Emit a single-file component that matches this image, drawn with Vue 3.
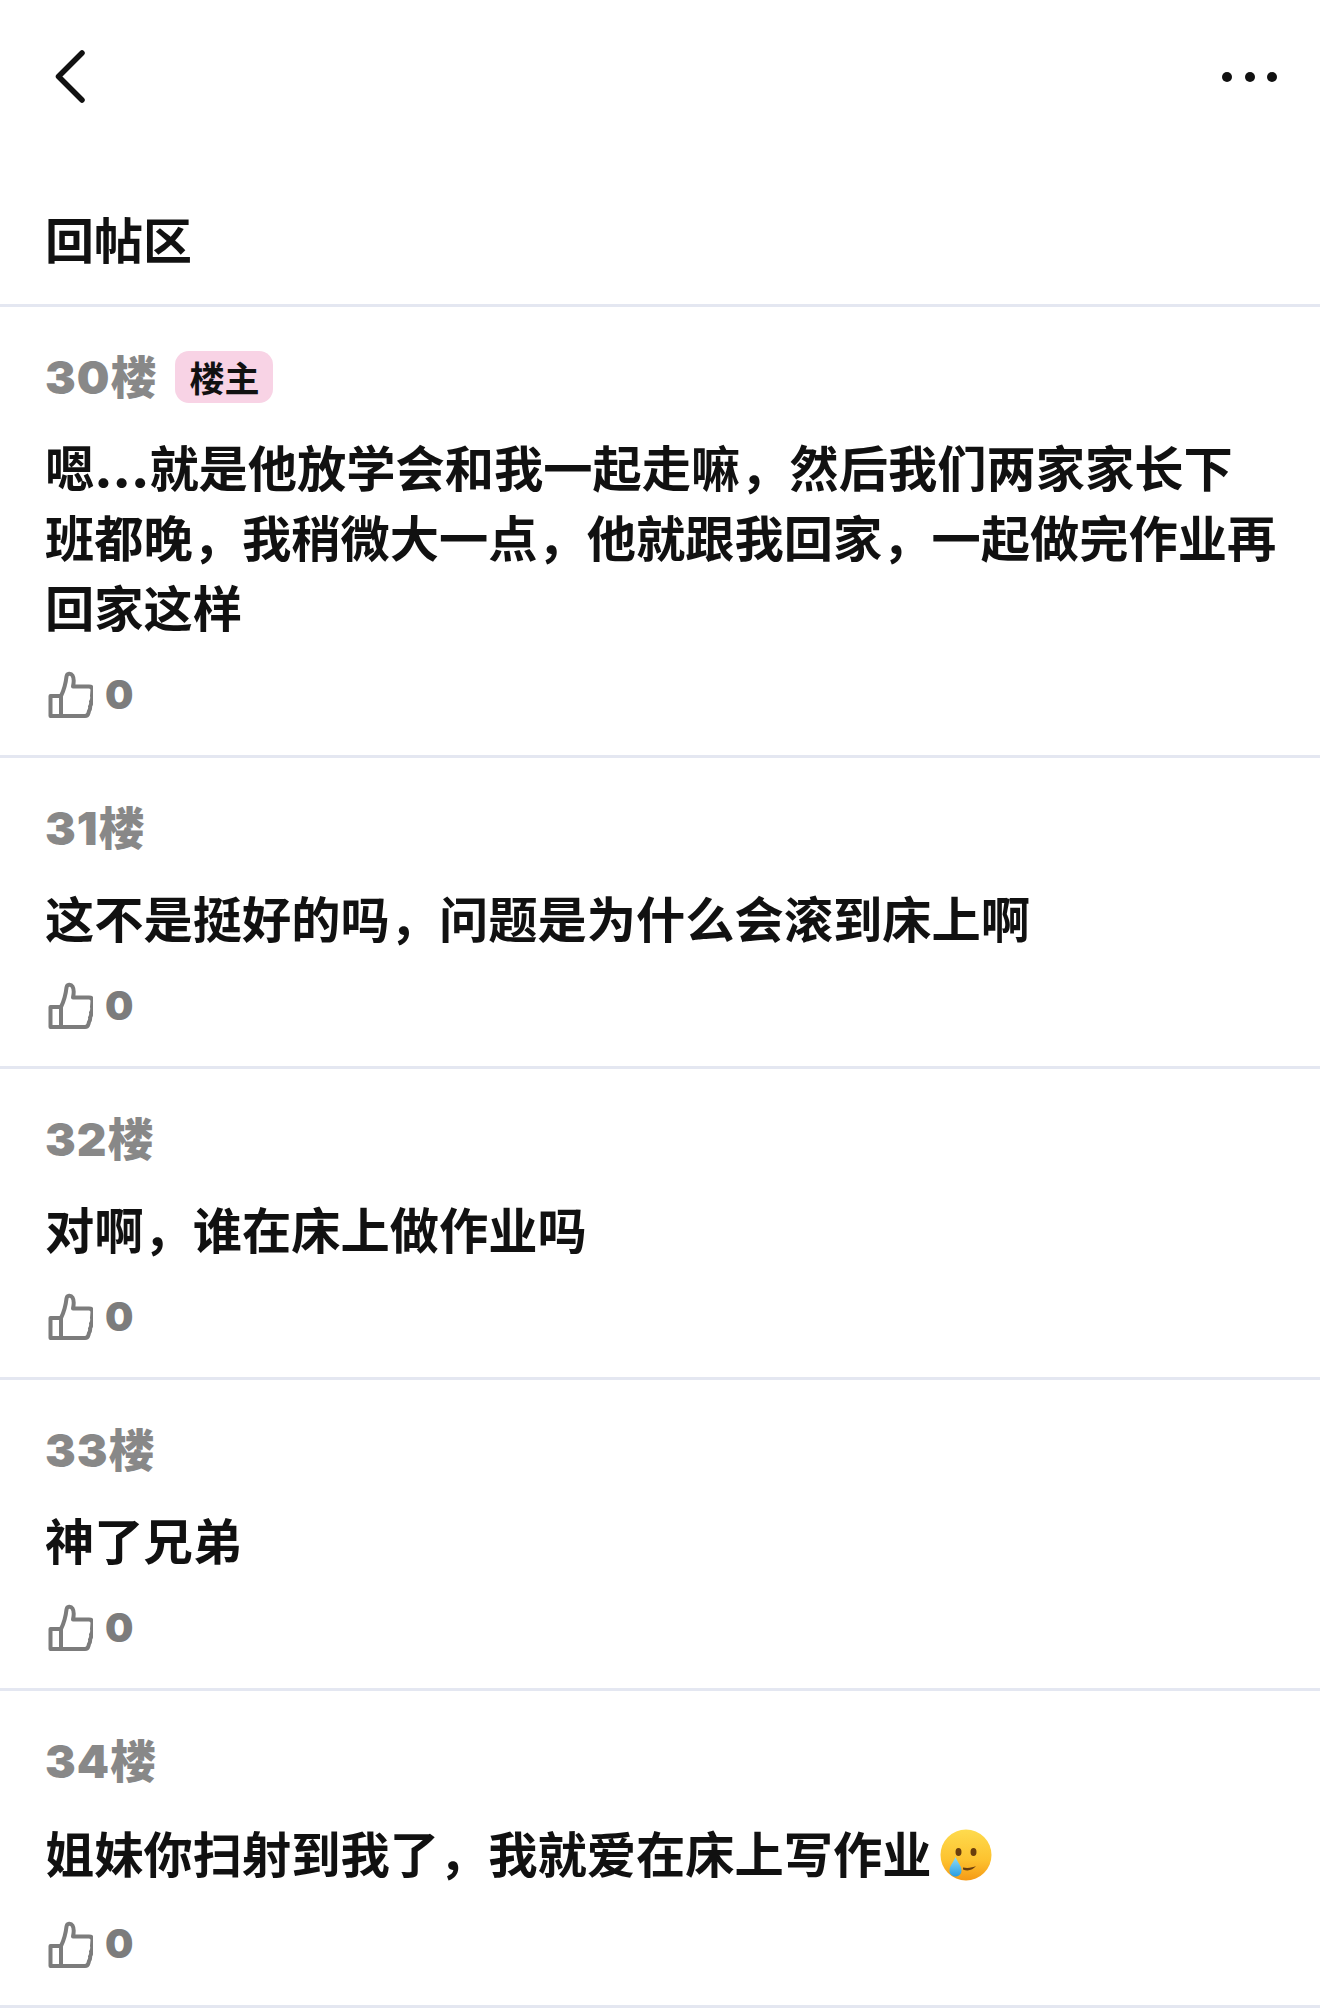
<script setup>
const replies = [
  { floor: '30楼', owner: true, dots: '嗯', text: '就是他放学会和我一起走嘛，然后我们两家家长下\n班都晚，我稍微大一点，他就跟我回家，一起做完作业再\n回家这样', likes: 0 },
  { floor: '31楼', text: '这不是挺好的吗，问题是为什么会滚到床上啊', likes: 0 },
  { floor: '32楼', text: '对啊，谁在床上做作业吗', likes: 0 },
  { floor: '33楼', text: '神了兄弟', likes: 0 },
  { floor: '34楼', text: '姐妹你扫射到我了，我就爱在床上写作业', emoji: true, likes: 0 }
]
</script>

<template>
  <div class="page">
    <header class="topbar">
      <svg class="back" width="32" height="56" viewBox="0 0 32 56" fill="none">
        <path d="M28 4 L4.5 27.5 L28 51" stroke="#111" stroke-width="5.5" stroke-linecap="round" stroke-linejoin="round" />
      </svg>
      <div class="more">
        <span></span>
        <span></span>
        <span></span>
      </div>
    </header>

    <h1 class="title">回帖区</h1>

    <div class="reply" v-for="reply in replies" :key="reply.floor">
      <div class="reply__meta">
        <span class="reply__floor">{{ reply.floor }}</span>
        <span v-if="reply.owner" class="reply__owner">楼主</span>
      </div>
      <p class="reply__text">
        <template v-if="reply.dots">{{ reply.dots }}<span class="reply__dots">...</span></template>{{ reply.text }}<svg v-if="reply.emoji" class="emoji" width="52" height="52" viewBox="0 0 52 52">
          <defs>
            <linearGradient id="face" x1="0" y1="0" x2="0" y2="1">
              <stop offset="0" stop-color="#fedb4e" />
              <stop offset="0.6" stop-color="#fdc22f" />
              <stop offset="1" stop-color="#f59a16" />
            </linearGradient>
            <linearGradient id="tear" x1="0" y1="0" x2="0" y2="1">
              <stop offset="0" stop-color="#8fdcf7" />
              <stop offset="1" stop-color="#2a9ee3" />
            </linearGradient>
          </defs>
          <circle cx="26" cy="26" r="25.5" fill="url(#face)" />
          <ellipse cx="18.5" cy="23" rx="3" ry="4" fill="#6b3e0c" />
          <ellipse cx="33.5" cy="23" rx="3" ry="4" fill="#6b3e0c" />
          <path d="M23 40.5 C28 42.5 33 41 36 37 C33 38.5 28 39.5 23 38.5 Z" fill="#6b3e0c" />
          <path d="M15.5 28 C18 34 21.5 37 21.5 41.5 C21.5 45 19 47.5 15.5 47.5 C12 47.5 9.5 45 9.5 41.5 C9.5 37 13 34 15.5 28 Z" fill="url(#tear)" />
        </svg>
      </p>
      <div class="reply__like">
        <svg width="48" height="48" viewBox="0 0 48 48" fill="none">
          <path d="M16 26 H5.5 V46 H16 M16 26 V46 H40 C42 46 43 45 43.5 43 L44 41 C45 39.5 45.5 38.5 45 36.5 C46 35 46.5 33.5 46 31.5 C47 30 47.5 28 47 26 L47.5 20 C47.5 17.5 46 16.5 44 16.5 H28 C29 12 29 8 27.5 5.5 C26 3 22 3 21.5 6.5 C21 11 19 20 16 26 Z" stroke="#7c7c7c" stroke-width="4" stroke-linejoin="round" />
        </svg>
        <span>{{ reply.likes }}</span>
      </div>
    </div>
  </div>
</template>

<style>
html, body {
  margin: 0;
  background: #fff;
}
</style>

<style scoped>
.page {
  min-height: 2010px;
  background: #fff;
  color: #111;
  font-family: Inter, "Noto Sans CJK SC", sans-serif;
}

.topbar {
  display: flex;
  justify-content: space-between;
  align-items: center;
  height: 56px;
  padding: 49px 43px 0 54px;
}

.more {
  display: flex;
  gap: 12.5px;
}

.more span {
  width: 10px;
  height: 10px;
  border-radius: 50%;
  background: #111;
}

.title {
  margin: 0;
  padding: 103px 45px 36px;
  font-size: 49px;
  line-height: 60px;
  font-weight: 700;
  font-family: "Noto Sans CJK SC", sans-serif;
  border-bottom: 3px solid #e4e7f1;
}

.reply {
  padding: 41px 40px 37px 45px;
  border-bottom: 3px solid #e4e7f1;
}

.reply__meta {
  display: flex;
  align-items: center;
  gap: 18px;
  height: 52px;
}

.reply__floor {
  font-size: 46px;
  font-weight: 900;
  letter-spacing: 1px;
  color: #888;
}

.reply__owner {
  width: 98px;
  height: 52px;
  margin-top: 6px;
  border-radius: 14px;
  background: #f8d3e5;
  color: #111;
  font-family: "Noto Sans CJK SC", sans-serif;
  font-size: 35px;
  font-weight: 700;
  line-height: 52px;
  text-align: center;
}

.reply__text {
  margin: 31px 0 0;
  font-family: "Noto Sans CJK SC", sans-serif;
  font-size: 49.25px;
  font-weight: 700;
  line-height: 70px;
  white-space: pre-line;
}

.reply__dots {
  font-family: Inter, sans-serif;
  font-weight: 900;
  line-height: 1;
}

.emoji {
  vertical-align: -17.5px;
  margin: 14px 0 9.5px 8px;
}

.reply__like {
  display: flex;
  align-items: center;
  gap: 12px;
  margin-top: 29px;
  height: 48px;
  color: #7c7c7c;
  font-size: 40px;
  font-weight: 900;
}
</style>
